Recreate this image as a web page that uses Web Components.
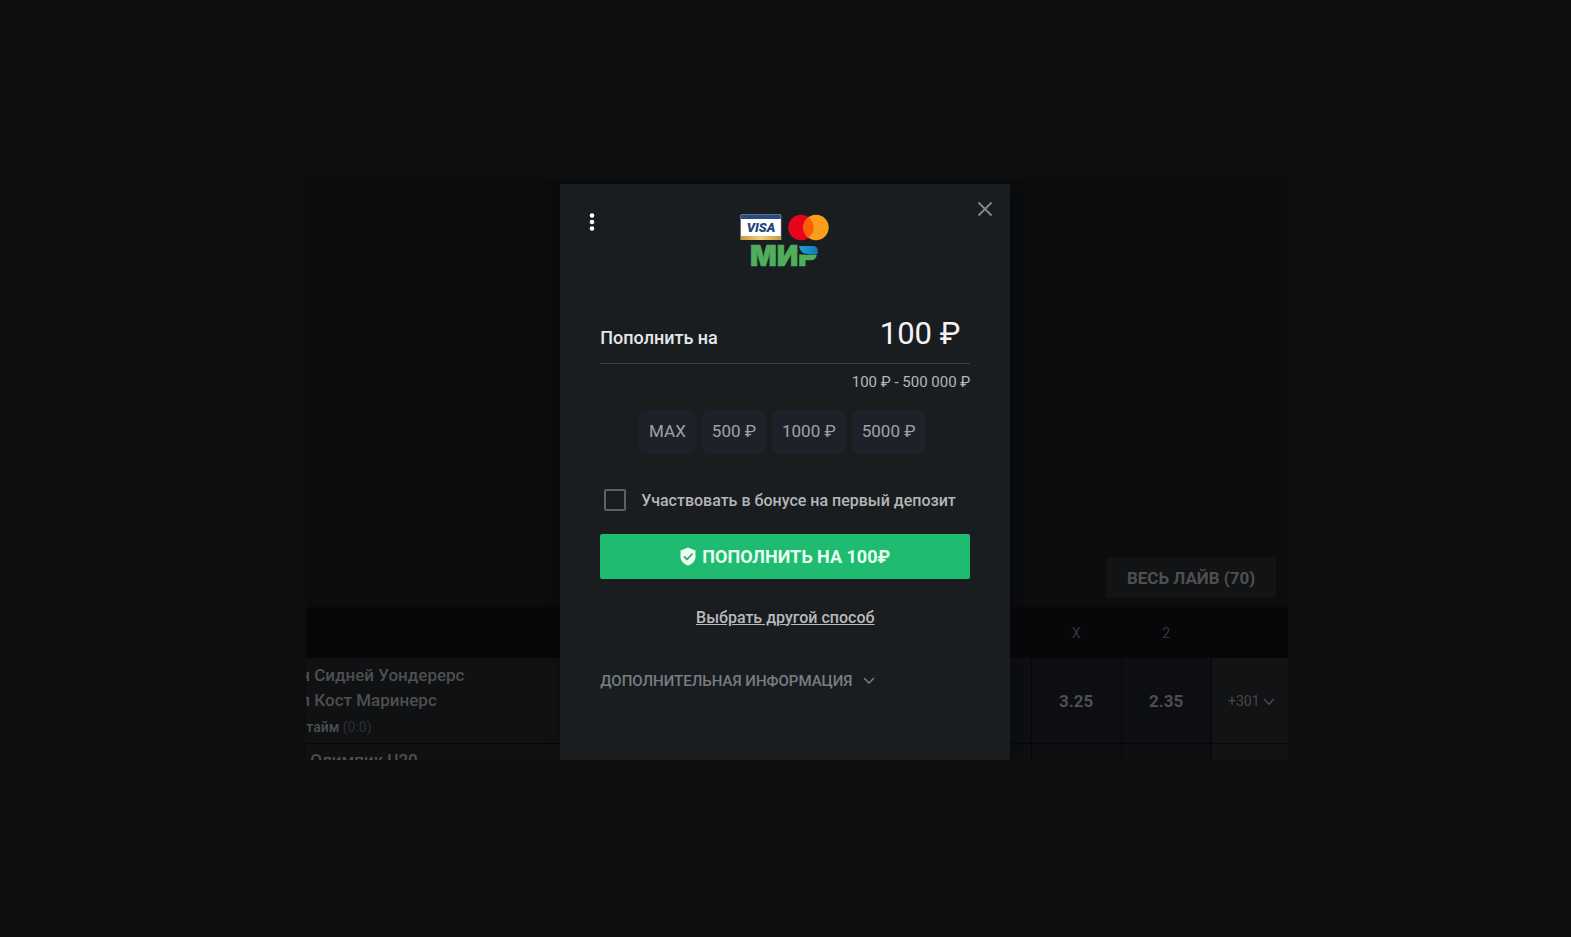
<!DOCTYPE html>
<html lang="ru">
<head>
<meta charset="utf-8">
<meta name="viewport" content="width=device-width, initial-scale=1">
<title>Пополнение счёта</title>
<style>
  body {
    margin: 0;
    background: #0e0e0e;
    font-family: Roboto, "Liberation Sans", sans-serif;
  }
</style>
</head>
<body>
<cashier-page>
  <live-board slot="board"></live-board>
  <deposit-card slot="dialog">
    <payment-logos slot="logos"></payment-logos>
    <amount-chip>MAX</amount-chip>
    <amount-chip>500 ₽</amount-chip>
    <amount-chip>1000 ₽</amount-chip>
    <amount-chip>5000 ₽</amount-chip>
  </deposit-card>
</cashier-page>

<script>
function makeTemplate(html) {
  const template = document.createElement('template');
  template.innerHTML = html;
  return template;
}

function define(name, template) {
  customElements.define(name, class extends HTMLElement {
    constructor() {
      super();
      this.attachShadow({ mode: 'open' }).appendChild(template.content.cloneNode(true));
    }
  });
}

// page: board and dialog share one grid cell
define('cashier-page', makeTemplate(`
<style>
:host {
  display: grid;
  grid-template-columns: 39fr minmax(0, 125fr) 36fr;
  align-items: center;
  min-height: 100vh;
}
.stage {
  grid-column: 2;
  display: grid;
  overflow: hidden;
}
.board, .dialog {
  grid-area: 1 / 1;
  min-width: 0;
}
.board {
  display: grid;
}
.dialog {
  display: grid;
  justify-content: center;
  padding: 6px 24px 0 0;
}
</style>
<main class="stage">
  <div class="board"><slot name="board"></slot></div>
  <div class="dialog"><slot name="dialog"></slot></div>
</main>
`));

// dimmed list of live matches
define('live-board', makeTemplate(`
<style>
:host {
  display: flex;
  flex-direction: column;
  background: #0b0c0e;
  color: #4d4f50;
  min-width: 0;
}
.hero {
  flex: 1;
  display: flex;
  justify-content: flex-end;
  align-items: flex-end;
  padding: 0 12px 9px;
}
.all {
  border: 0;
  border-radius: 2px;
  height: 41px;
  padding: 0 21px;
  background: #121315;
  color: #4d4f50;
  font: bold 17px Roboto, sans-serif;
}
table {
  width: 100%;
  table-layout: fixed;
  border-collapse: collapse;
}
.odd { width: 90px; }
.more { width: 77px; }
th {
  height: 51px;
  padding: 0;
  background: #07070a;
  color: #35373a;
  font-weight: 400;
  font-size: 14px;
}
td {
  padding: 2px 0 0;
  height: 85px;
  box-sizing: border-box;
  background: #0d0e11;
  border-left: 1px solid #060709;
  border-bottom: 1px solid #060709;
  text-align: center;
  font-weight: 700;
  font-size: 17px;
}
td.teams {
  padding-top: 3px;
  border-left: 0;
  background: #0f1113;
  text-align: left;
  font-weight: 500;
  line-height: 25px;
  overflow: hidden;
  white-space: nowrap;
}
td.teams div { margin-left: -6px; }
td.teams .time {
  margin-left: 0;
  font-size: 14px;
  line-height: 28px;
}
.time span { color: #2e3034; font-weight: 400; }
td.rest {
  padding: 0 0 0 3px;
  background: #111315;
  font-weight: 400;
}
.rest button {
  border: 0;
  padding: 0;
  background: none;
  color: #45474a;
  font: 14px Roboto, sans-serif;
}
.clip {
  height: 16px;
  overflow: hidden;
}
.clip td.teams { vertical-align: top; padding: 4px 0 0 4px; }
.clip td.teams div { margin: 0; }
</style>
<div class="hero"><button class="all" type="button">ВЕСЬ ЛАЙВ (70)</button></div>
<table>
  <colgroup><col><col class="odd"><col class="odd"><col class="odd"><col class="more"></colgroup>
  <thead><tr><th></th><th></th><th>X</th><th>2</th><th></th></tr></thead>
  <tbody>
    <tr>
      <td class="teams">
        <div>н Сидней Уондерерс</div>
        <div>л Кост Маринерс</div>
        <div class="time">тайм <span>(0:0)</span></div>
      </td>
      <td></td>
      <td>3.25</td>
      <td>2.35</td>
      <td class="rest"><button type="button">+301
        <svg width="12" height="8" viewBox="0 0 12 8" fill="none" stroke="currentColor" stroke-width="1.6"><path d="M1 1l5 5 5-5"/></svg></button></td>
    </tr>
  </tbody>
</table>
<div class="clip">
  <table>
    <colgroup><col><col class="odd"><col class="odd"><col class="odd"><col class="more"></colgroup>
    <tbody><tr><td class="teams"><div>Олимпик U20</div></td><td></td><td></td><td></td><td class="rest"></td></tr></tbody>
  </table>
</div>
`));

// visa / mastercard / mir
define('payment-logos', makeTemplate(`
<style>
:host { display: block; }
svg { display: block; }
text { font-family: Roboto, sans-serif; }
.mir { font-family: Inter, Roboto, sans-serif; }
</style>
<svg width="90" height="54" viewBox="0 0 90 54" role="img">
  <defs>
    <linearGradient id="gold" x1="0" x2="1"><stop offset="0" stop-color="#c99a35"/><stop offset=".5" stop-color="#f0cf80"/><stop offset="1" stop-color="#c99a35"/></linearGradient>
    <linearGradient id="sky" x1="0" x2="1"><stop offset="0" stop-color="#1b9fd8"/><stop offset="1" stop-color="#1279b8"/></linearGradient>
  </defs>
  <rect x="1" y="1" width="40" height="25" fill="#fff"/>
  <rect x="1" y="1" width="40" height="4" fill="#284a86"/>
  <rect x="1" y="22" width="40" height="4" fill="url(#gold)"/>
  <path d="M1 .5h40M.5 1v25M41 1v25" stroke="#9aa9c2" stroke-width=".6" fill="none"/>
  <text x="21" y="18" text-anchor="middle" font-size="13" font-weight="900" font-style="italic" fill="#25427f">VISA</text>
  <circle cx="61" cy="13.500" r="12.700" fill="#e9041e"/>
  <circle cx="76" cy="13.500" r="12.700" fill="#f99d1c"/>
  <path d="M68.500 3.300a12.700 12.700 0 0 1 0 20.400a12.700 12.700 0 0 1 0-20.400z" fill="#f95f09"/>
  <text class="mir" x="10" y="52" font-size="28" font-weight="900" fill="#4fae5b" stroke="#4fae5b" stroke-width=".6">МИР</text>
  <path d="M59 30h20v10.500h-20z" fill="#1a1d20"/>
  <path d="M59 32h14c4 0 5.500 3.500 4.500 8H67c-4 0-7-3-8-8z" fill="url(#sky)"/>
  <path d="M65 41h12c-1 3.500-3 5.300-6 5.300h-6z" fill="#4fae5b"/>
</svg>
`));

define('amount-chip', makeTemplate(`
<style>
:host { display: block; }
button {
  display: block;
  height: 44px;
  padding: 0 10px 2px;
  border: 0;
  border-radius: 8px;
  background: #1e2129;
  color: #a0a1a5;
  font: 17px Roboto, sans-serif;
}
</style>
<button type="button"><slot></slot></button>
`));

define('deposit-card', makeTemplate(`
<style>
:host {
  display: block;
  box-sizing: border-box;
  width: 450px;
  max-width: 100%;
  padding: 16px 40px 69px;
  background: #1a1d20;
  box-shadow: 0 0 12px rgba(0, 0, 0, .3);
  color: #b5b6b8;
}
button { font-family: inherit; cursor: pointer; }
header {
  display: grid;
  grid-template-columns: 1fr auto 1fr;
  align-items: start;
  margin: 0 -24px;
  height: 118px;
}
.icon {
  border: 0;
  padding: 0;
  background: none;
  line-height: 0;
}
.dots { justify-self: start; margin: 12px 0 0 12px; color: #fff; }
.close { justify-self: end; margin: 1px 1px 0 0; color: #85888b; }
.logos { margin-top: 14px; }
.amount {
  display: flex;
  justify-content: space-between;
  align-items: baseline;
  height: 45px;
  border-bottom: 1px solid #3d4043;
  color: #e6e7e8;
  font-size: 18px;
  font-weight: 500;
}
.amount input {
  width: 160px;
  box-sizing: border-box;
  padding: 0 10px 0 0;
  border: 0;
  outline: 0;
  background: none;
  color: #f4f4f5;
  font: 31px/32px Roboto, sans-serif;
  text-align: right;
}
.range {
  margin: 8px 0 18px;
  font-size: 15px;
  line-height: 20px;
  text-align: right;
}
.chips {
  display: flex;
  justify-content: center;
  gap: 6px;
  padding-right: 6px;
}
.bonus {
  display: flex;
  align-items: center;
  gap: 15px;
  margin: 35px 0 22px 4px;
  font-size: 16px;
  font-weight: 500;
  line-height: 23px;
  white-space: nowrap;
}
.bonus input {
  appearance: none;
  flex: none;
  width: 22px;
  height: 22px;
  margin: 0;
  border: 2px solid #5d6165;
  border-radius: 2px;
}
.pay {
  display: flex;
  justify-content: center;
  align-items: center;
  gap: 6px;
  width: 100%;
  height: 45px;
  border: 0;
  border-radius: 2px;
  background: #1fbb70;
  color: #e4fff0;
  font-size: 18px;
  font-weight: 700;
}
.other {
  display: block;
  width: fit-content;
  margin: 29px auto 43px;
  color: #b9babc;
  font-size: 16px;
  font-weight: 500;
  line-height: 20px;
}
.info {
  display: flex;
  align-items: center;
  gap: 10px;
  padding: 0;
  border: 0;
  background: none;
  color: #777d84;
  font-size: 15px;
  font-weight: 500;
  line-height: 20px;
}
</style>
<header>
  <button class="icon dots" type="button" aria-label="Меню">
    <svg width="8" height="20" viewBox="0 0 8 20" fill="currentColor"><circle cx="4" cy="3.500" r="2.300"/><circle cx="4" cy="10" r="2.300"/><circle cx="4" cy="16.500" r="2.300"/></svg>
  </button>
  <div class="logos"><slot name="logos"></slot></div>
  <button class="icon close" type="button" aria-label="Закрыть">
    <svg width="16" height="16" viewBox="0 0 16 16" fill="none" stroke="currentColor" stroke-width="1.8"><path d="M1.500 1.500l13 13M14.500 1.500l-13 13"/></svg>
  </button>
</header>
<div class="amount">
  <label for="sum">Пополнить на</label>
  <input id="sum" type="text" value="100 ₽">
</div>
<p class="range">100 ₽ - 500 000 ₽</p>
<div class="chips"><slot></slot></div>
<label class="bonus"><input type="checkbox">Участвовать в бонусе на первый депозит</label>
<button class="pay" type="button">
  <svg width="16" height="19" viewBox="0 0 16 19"><path d="M8 .5l7.500 3v6c0 4.300-3 7.600-7.500 9C3.500 17.100.5 13.800.5 9.500v-6z" fill="#eafff3"/><path d="M4 9.500l3 3 5.500-6" fill="none" stroke="#4a9f76" stroke-width="1.800"/></svg>
  ПОПОЛНИТЬ НА 100₽
</button>
<a class="other" href="#methods">Выбрать другой способ</a>
<button class="info" type="button" aria-expanded="false">ДОПОЛНИТЕЛЬНАЯ ИНФОРМАЦИЯ
  <svg width="12" height="8" viewBox="0 0 12 8" fill="none" stroke="currentColor" stroke-width="1.500"><path d="M1 1l5 5 5-5"/></svg>
</button>
`));
</script>
</body>
</html>
